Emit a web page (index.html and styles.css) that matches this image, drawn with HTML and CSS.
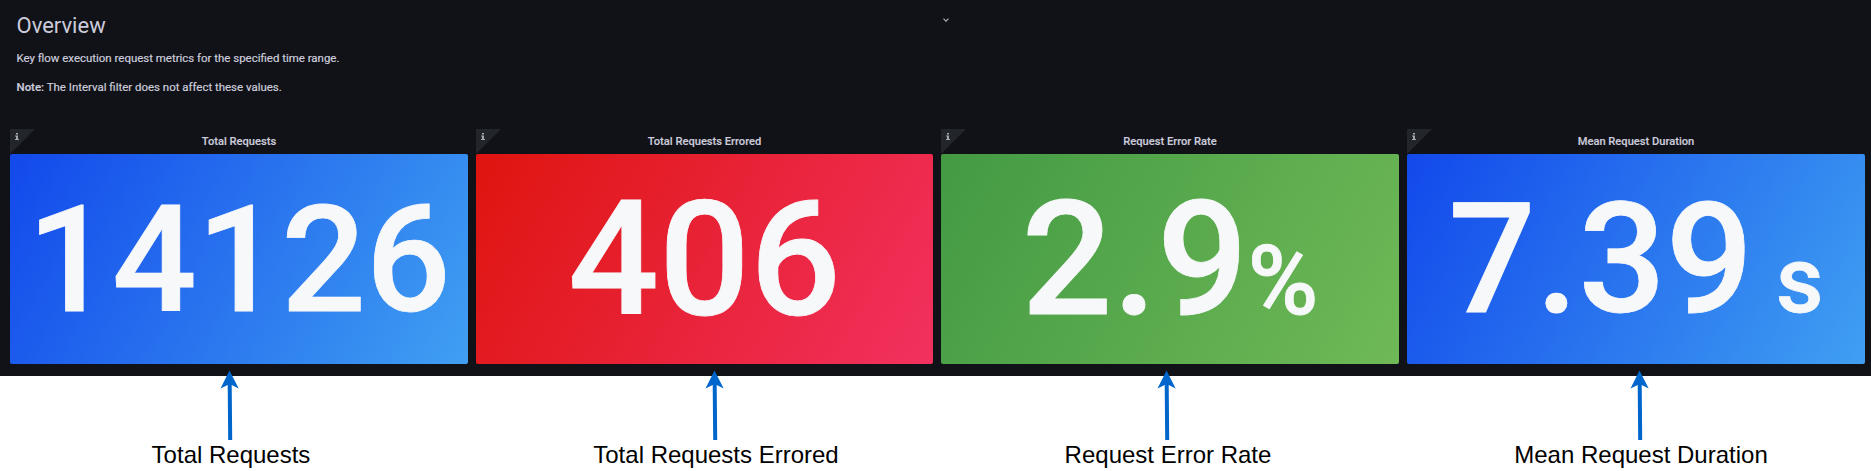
FILE: index.html
```
<!DOCTYPE html>
<html lang="en">
<head>
<meta charset="utf-8">
<title>Overview</title>
<link rel="stylesheet" href="styles.css">
</head>
<body>
<main class="dashboard">
  <header class="intro">
    <h1 class="intro-title">Overview</h1>
    <p class="intro-text">Key flow execution request metrics for the specified time range.</p>
    <p class="intro-text"><strong>Note:</strong> The Interval filter does not affect these values.</p>
    <svg class="intro-chevron" width="6" height="4" viewBox="0 0 6 4"><path d="M.5 .7 3 3.2 5.5 .7" fill="none" stroke="#a9aab2" stroke-width="1.2"/></svg>
  </header>
  <section class="panels">
    <article class="panel">
      <div class="panel-head"><span class="info"><svg width="4" height="7" viewBox="0 0 4 7"><path d="M1 0h2v1.6H1zM0 2.5h3V6H4v1H0V6h1V3.4H0z" fill="#a5a7ad"/></svg></span><h2 class="panel-title">Total Requests</h2></div>
      <div class="stat stat-blue stat-requests"><span class="value">14126</span></div>
    </article>
    <article class="panel">
      <div class="panel-head"><span class="info"><svg width="4" height="7" viewBox="0 0 4 7"><path d="M1 0h2v1.6H1zM0 2.5h3V6H4v1H0V6h1V3.4H0z" fill="#a5a7ad"/></svg></span><h2 class="panel-title">Total Requests Errored</h2></div>
      <div class="stat stat-red"><span class="value">406</span></div>
    </article>
    <article class="panel">
      <div class="panel-head"><span class="info"><svg width="4" height="7" viewBox="0 0 4 7"><path d="M1 0h2v1.6H1zM0 2.5h3V6H4v1H0V6h1V3.4H0z" fill="#a5a7ad"/></svg></span><h2 class="panel-title">Request Error Rate</h2></div>
      <div class="stat stat-green"><span class="value">2.9<span class="unit">%</span></span></div>
    </article>
    <article class="panel">
      <div class="panel-head"><span class="info"><svg width="4" height="7" viewBox="0 0 4 7"><path d="M1 0h2v1.6H1zM0 2.5h3V6H4v1H0V6h1V3.4H0z" fill="#a5a7ad"/></svg></span><h2 class="panel-title">Mean Request Duration</h2></div>
      <div class="stat stat-blue stat-duration"><span class="value">7.39<span class="unit unit-spaced">s</span></span></div>
    </article>
  </section>
</main>
<section class="callouts">
  <div class="callout callout-requests">
    <svg class="arrow" width="20" height="71" viewBox="0 0 20 71"><path d="M9.5 .5 18.7 18.5 11.7 15 12.2 70H8.2L7.7 15 .5 18.5z" fill="#0066cc"/></svg>
    <span>Total Requests</span>
  </div>
  <div class="callout callout-errored">
    <svg class="arrow" width="20" height="71" viewBox="0 0 20 71"><path d="M9.5 .5 18.7 18.5 11.7 15 12.2 70H8.2L7.7 15 .5 18.5z" fill="#0066cc"/></svg>
    <span>Total Requests Errored</span>
  </div>
  <div class="callout callout-rate">
    <svg class="arrow" width="20" height="71" viewBox="0 0 20 71"><path d="M9.5 .5 18.7 18.5 11.7 15 12.2 70H8.2L7.7 15 .5 18.5z" fill="#0066cc"/></svg>
    <span>Request Error Rate</span>
  </div>
  <div class="callout callout-duration">
    <svg class="arrow" width="20" height="71" viewBox="0 0 20 71"><path d="M9.5 .5 18.7 18.5 11.7 15 12.2 70H8.2L7.7 15 .5 18.5z" fill="#0066cc"/></svg>
    <span>Mean Request Duration</span>
  </div>
</section>
</body>
</html>
```

FILE: styles.css
```
* { box-sizing: border-box; }
body {
  margin: 0;
  background: #fff;
  overflow: hidden;
}
.dashboard {
  height: 376px;
  background: #111217;
  color: #ccccdc;
  font-family: Roboto, sans-serif;
}
.intro {
  position: relative;
  height: 129px;
  padding: 12px 16.5px 0;
}
.intro-title {
  margin: 0 0 9px;
  font-size: 22px;
  font-weight: 400;
  line-height: 28px;
}
.intro-text {
  margin: 0 0 11px;
  font-size: 11.46px;
  line-height: 18px;
  font-weight: 400;
  -webkit-text-stroke: 0.2px currentColor;
}
.intro-text strong { font-weight: 500; }
.intro-chevron {
  position: absolute;
  left: 943px;
  top: 18px;
}
.panels {
  display: grid;
  grid-template-columns: 458px 457px 458px 458px;
  gap: 8px;
  padding-left: 10px;
}
.panel-head {
  position: relative;
  height: 25px;
  text-align: center;
}
.panel-title {
  margin: 0;
  font-size: 11.15px;
  font-weight: 500;
  line-height: 25px;
  -webkit-text-stroke: 0.15px currentColor;
}
.info {
  position: absolute;
  left: 0;
  top: 0;
  width: 25px;
  height: 25px;
  padding: 4px 0 0 5px;
  background: #22252b;
  clip-path: polygon(0 0, 100% 0, 0 100%);
  line-height: 0;
  text-align: left;
}
.info svg { display: block; }
.stat {
  display: flex;
  align-items: center;
  justify-content: center;
  height: 210px;
  padding-top: 2px;
  border-radius: 2px;
  color: #f7f8fa;
  font-size: 160px;
  font-weight: 500;
  line-height: 1;
}
.stat-blue { background: linear-gradient(120deg, #1249eb, #409ff2); }
.stat-red { background: linear-gradient(120deg, #df140f, #f2315f); }
.stat-green { background: linear-gradient(120deg, #439a43, #6fb957); }
.stat-requests { font-size: 149px; }
.stat-duration { font-size: 153.6px; }
.value {
  white-space: nowrap;
  -webkit-text-stroke: 0.8px currentColor;
}
.unit { font-size: 0.6em; }
.unit-spaced { margin-left: 0.25em; }
.callouts {
  display: flex;
  margin-top: -6px;
  position: relative;
  color: #000;
  font: 24px/28px "Liberation Sans", sans-serif;
}
.callout {
  display: flex;
  flex-direction: column;
  align-items: center;
  width: 300px;
  white-space: nowrap;
}
.arrow { display: block; }
.callout-requests { margin-left: 81px; }
.callout-errored { margin-left: 185px; }
.callout-rate { margin-left: 152px; }
.callout-duration { margin-left: 173px; }
.callout .arrow { margin-left: -2px; }
```
